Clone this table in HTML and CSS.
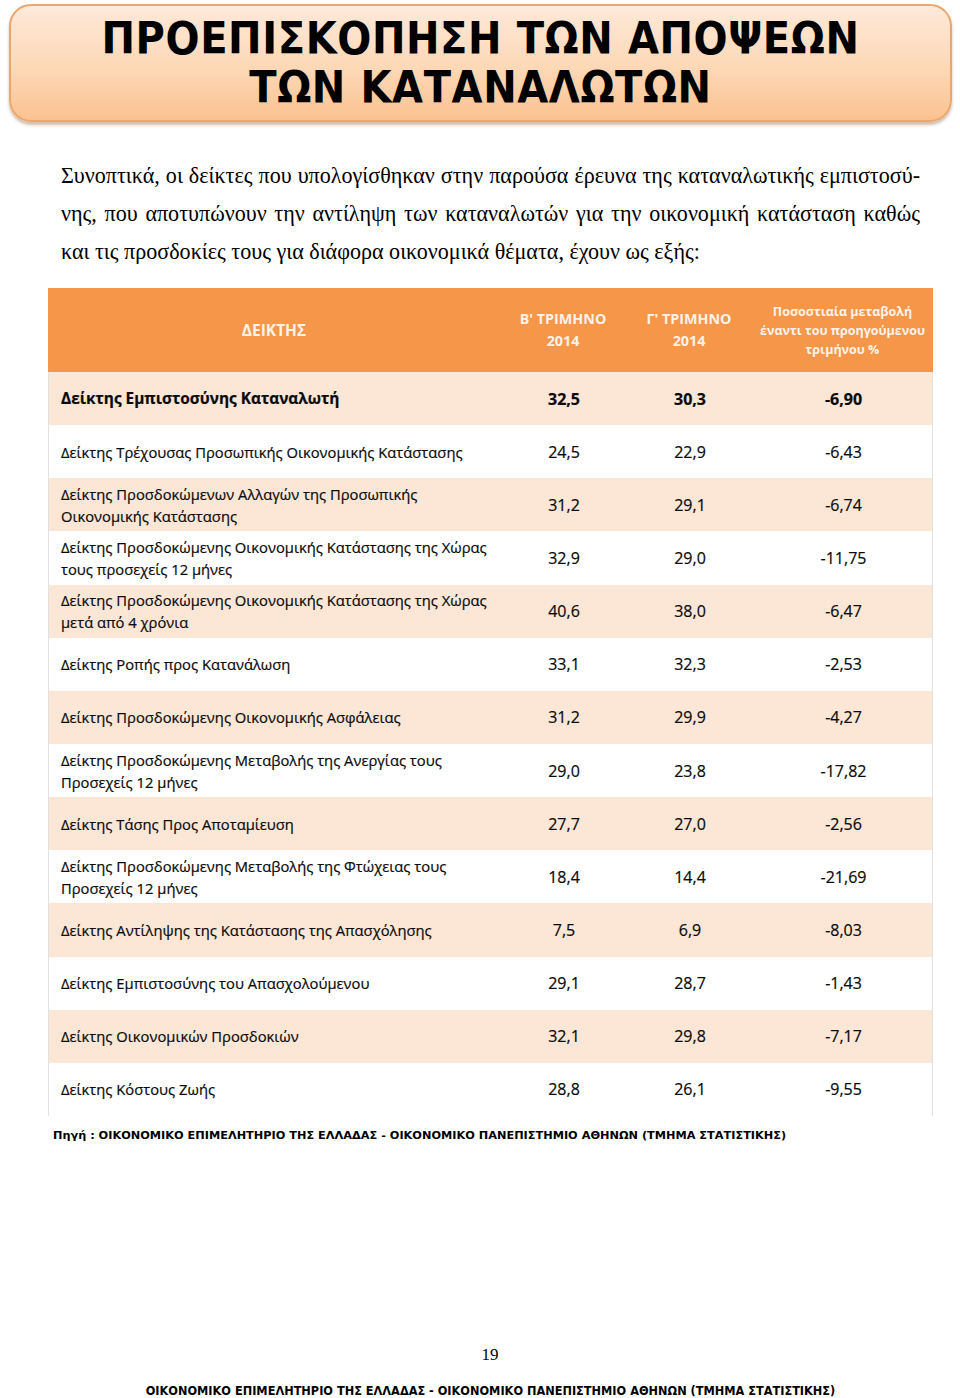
FILE: index.html
```html
<!DOCTYPE html>
<html lang="el">
<head>
<meta charset="utf-8">
<link rel="stylesheet" href="styles.css">
</head>
<body>
<div class="page">
  <div class="title-box">
    <h1>ΠΡΟΕΠΙΣΚΟΠΗΣΗ ΤΩΝ ΑΠΟΨΕΩΝ<br>ΤΩΝ ΚΑΤΑΝΑΛΩΤΩΝ</h1>
  </div>
  <p class="intro"><span class="jl">Συνοπτικά, οι δείκτες που υπολογίσθηκαν στην παρούσα έρευνα της καταναλωτικής εμπιστοσύ-</span><span class="jl">νης, που αποτυπώνουν την αντίληψη των καταναλωτών για την οικονομική κατάσταση καθώς</span><span class="ll">και τις προσδοκίες τους για διάφορα οικονομικά θέματα, έχουν ως εξής:</span></p>

  <div class="table">
    <div class="row head">
      <div class="cell label">ΔΕΙΚΤΗΣ</div>
      <div class="cell">Β' ΤΡΙΜΗΝΟ<br>2014</div>
      <div class="cell">Γ' ΤΡΙΜΗΝΟ<br>2014</div>
      <div class="cell small">Ποσοστιαία μεταβολή<br>έναντι του προηγούμενου<br>τριμήνου %</div>
    </div>
    <div class="row odd bold"><div class="cell label">Δείκτης Εμπιστοσύνης Καταναλωτή</div><div class="cell">32,5</div><div class="cell">30,3</div><div class="cell">-6,90</div></div>
    <div class="row"><div class="cell label">Δείκτης Τρέχουσας Προσωπικής Οικονομικής Κατάστασης</div><div class="cell">24,5</div><div class="cell">22,9</div><div class="cell">-6,43</div></div>
    <div class="row odd"><div class="cell label">Δείκτης Προσδοκώμενων Αλλαγών της Προσωπικής<br>Οικονομικής Κατάστασης</div><div class="cell">31,2</div><div class="cell">29,1</div><div class="cell">-6,74</div></div>
    <div class="row"><div class="cell label">Δείκτης Προσδοκώμενης Οικονομικής Κατάστασης της Χώρας<br>τους προσεχείς 12 μήνες</div><div class="cell">32,9</div><div class="cell">29,0</div><div class="cell">-11,75</div></div>
    <div class="row odd"><div class="cell label">Δείκτης Προσδοκώμενης Οικονομικής Κατάστασης της Χώρας<br>μετά από 4 χρόνια</div><div class="cell">40,6</div><div class="cell">38,0</div><div class="cell">-6,47</div></div>
    <div class="row"><div class="cell label">Δείκτης Ροπής προς Κατανάλωση</div><div class="cell">33,1</div><div class="cell">32,3</div><div class="cell">-2,53</div></div>
    <div class="row odd"><div class="cell label">Δείκτης Προσδοκώμενης Οικονομικής Ασφάλειας</div><div class="cell">31,2</div><div class="cell">29,9</div><div class="cell">-4,27</div></div>
    <div class="row"><div class="cell label">Δείκτης Προσδοκώμενης Μεταβολής της Ανεργίας τους<br>Προσεχείς 12 μήνες</div><div class="cell">29,0</div><div class="cell">23,8</div><div class="cell">-17,82</div></div>
    <div class="row odd"><div class="cell label">Δείκτης Τάσης Προς Αποταμίευση</div><div class="cell">27,7</div><div class="cell">27,0</div><div class="cell">-2,56</div></div>
    <div class="row"><div class="cell label">Δείκτης Προσδοκώμενης Μεταβολής της Φτώχειας τους<br>Προσεχείς 12 μήνες</div><div class="cell">18,4</div><div class="cell">14,4</div><div class="cell">-21,69</div></div>
    <div class="row odd"><div class="cell label">Δείκτης Αντίληψης της Κατάστασης της Απασχόλησης</div><div class="cell">7,5</div><div class="cell">6,9</div><div class="cell">-8,03</div></div>
    <div class="row"><div class="cell label">Δείκτης Εμπιστοσύνης του Απασχολούμενου</div><div class="cell">29,1</div><div class="cell">28,7</div><div class="cell">-1,43</div></div>
    <div class="row odd"><div class="cell label">Δείκτης Οικονομικών Προσδοκιών</div><div class="cell">32,1</div><div class="cell">29,8</div><div class="cell">-7,17</div></div>
    <div class="row last"><div class="cell label">Δείκτης Κόστους Ζωής</div><div class="cell">28,8</div><div class="cell">26,1</div><div class="cell">-9,55</div></div>
  </div>
  <p class="source">Πηγή : ΟΙΚΟΝΟΜΙΚΟ ΕΠΙΜΕΛΗΤΗΡΙΟ ΤΗΣ ΕΛΛΑΔΑΣ - ΟΙΚΟΝΟΜΙΚΟ ΠΑΝΕΠΙΣΤΗΜΙΟ ΑΘΗΝΩΝ (ΤΜΗΜΑ ΣΤΑΤΙΣΤΙΚΗΣ)</p>

  <div class="spacer"></div>
  <div class="pagenum">19</div>
  <div class="footer">ΟΙΚΟΝΟΜΙΚΟ ΕΠΙΜΕΛΗΤΗΡΙΟ ΤΗΣ ΕΛΛΑΔΑΣ - ΟΙΚΟΝΟΜΙΚΟ ΠΑΝΕΠΙΣΤΗΜΙΟ ΑΘΗΝΩΝ (ΤΜΗΜΑ ΣΤΑΤΙΣΤΙΚΗΣ)</div>
</div>
</body>
</html>
```

FILE: styles.css
```css
* { box-sizing: border-box; }
html, body { margin: 0; padding: 0; background: #fff; }
.page {
  width: 960px;
  height: 1398px;
  display: flex;
  flex-direction: column;
  font-family: "Liberation Serif", serif;
  color: #000;
}
.title-box {
  margin: 4px 8px 0 9px;
  height: 118px;
  border: 2px solid #eea56a;
  border-radius: 22px;
  background: linear-gradient(to bottom, #fee9d9 0%, #fdd8b6 55%, #fbc290 100%);
  box-shadow: 0 3px 3px rgba(150, 110, 80, 0.45);
  display: flex;
  align-items: center;
  justify-content: center;
}
.title-box h1 {
  margin: 0;
  font-family: "DejaVu Sans Condensed", "DejaVu Sans", sans-serif;
  font-weight: bold;
  font-size: 44.5px;
  line-height: 49px;
  text-align: center;
  letter-spacing: 0.6px;
}
.intro {
  margin: 35px 40px 0 61px;
  font-size: 22.1px;
  line-height: 38px;
}
.intro .jl {
  display: block;
  text-align: justify;
  text-align-last: justify;
}
.intro .ll { display: block; }
.table {
  margin: 17px 27px 0 48px;
  font-family: "Open Sans", sans-serif;
  color: #0a0a0a;
  -webkit-text-stroke: 0.2px #0a0a0a;
}
.row {
  display: grid;
  grid-template-columns: 452px 126px 126px 181px;
  height: 53.15px;
  align-items: center;
  border-left: 1px solid #e2e2e2;
  border-right: 1px solid #e2e2e2;
}
.row.odd { background: #fce6d6; }
.row.head {
  height: 84px;
  background: #f69649;
  color: #fdf3ea;
  -webkit-text-stroke: 0;
  font-weight: 700;
  border: none;
}
.cell {
  text-align: center;
  font-size: 16px;
  line-height: 22px;
}
.row.head .cell { font-size: 14.3px; line-height: 22px; }
.row.head .cell.small { font-size: 12.5px; line-height: 19px; }
.cell.label {
  text-align: left;
  padding-left: 12px;
  font-size: 14.75px;
}
.row.head .cell.label { text-align: center; padding-left: 0; font-size: 15.5px; }
.row.bold .cell { font-weight: 700; font-size: 16px; }
.row.bold .cell.label { font-size: 15.4px; }
.source {
  margin: 12px 0 0 53px;
  font-family: "DejaVu Sans", sans-serif;
  font-weight: bold;
  font-size: 11.3px;
  line-height: 16px;
}
.spacer { flex: 1; }
.pagenum {
  text-align: center;
  margin-left: 20px;
  font-size: 17px;
  line-height: 20px;
  margin-bottom: 19px;
}
.footer {
  text-align: center;
  margin-left: 21px;
  font-family: "DejaVu Sans Condensed", "DejaVu Sans", sans-serif;
  font-weight: bold;
  font-size: 12.6px;
  line-height: 14px;
  margin-bottom: 0;
}
```
